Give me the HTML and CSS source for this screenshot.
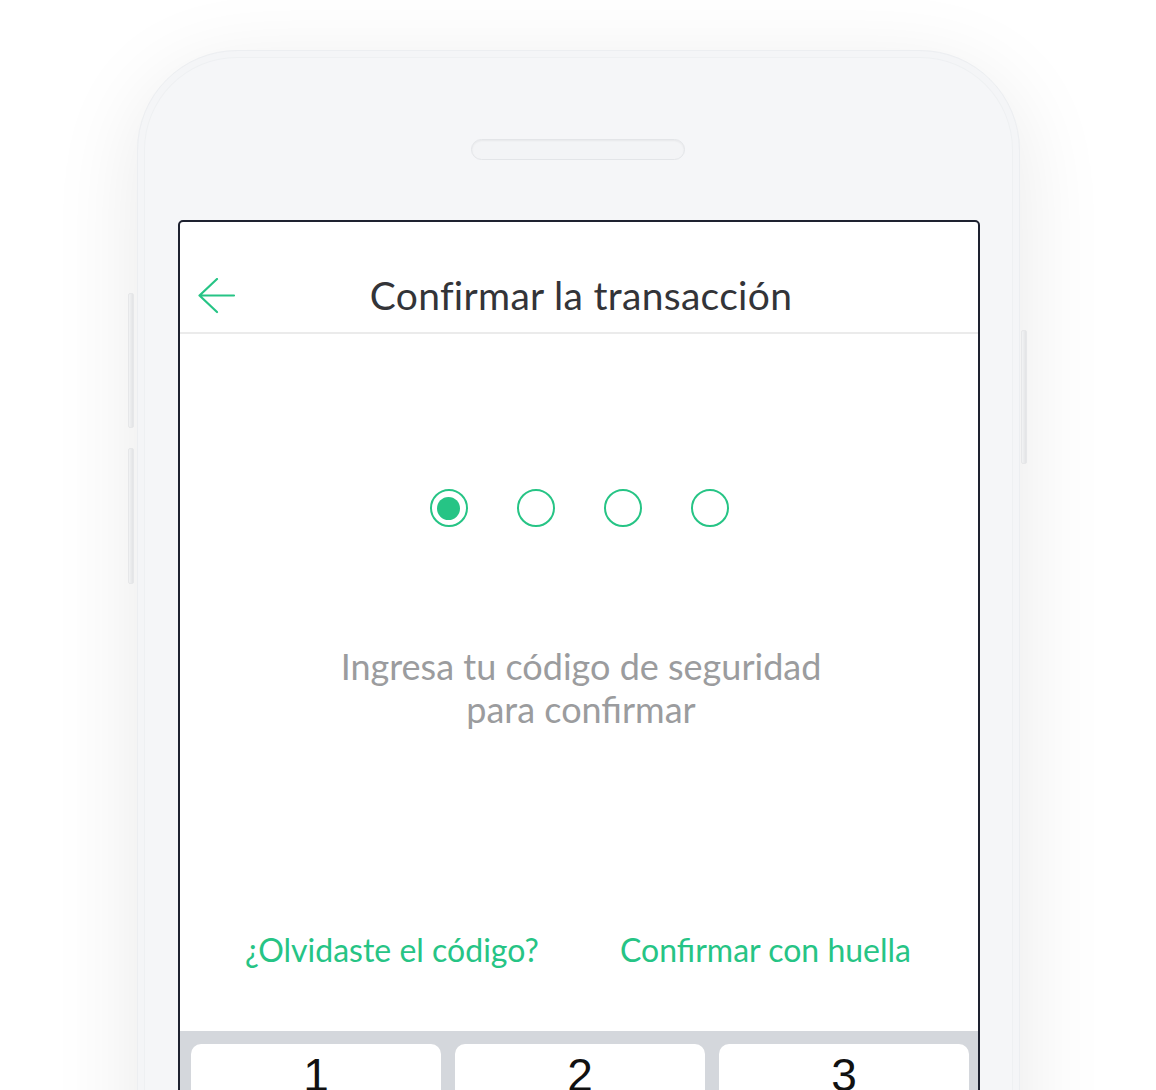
FILE: index.html
```html
<!DOCTYPE html>
<html lang="es">
<head>
<meta charset="utf-8">
<title>Confirmar la transacción</title>
<link rel="stylesheet" href="styles.css">
</head>
<body>
<div class="stage">
  <div class="phone">
    <span class="btn btn-l1"></span>
    <span class="btn btn-l2"></span>
    <span class="btn btn-r"></span>
    <div class="speaker"></div>
    <div class="screen">
      <header class="topbar">
        <div class="back">
          <svg width="38" height="36" viewBox="0 0 38 36" fill="none" stroke="#26c485" stroke-width="2.2" stroke-linecap="round" stroke-linejoin="round">
            <path d="M36 17.5 H1.5 M19 1 L1.5 17.5 L19 34"/>
          </svg>
        </div>
        <h1 class="title">Confirmar la transacción</h1>
        <div></div>
      </header>
      <main class="content">
        <div class="dots">
          <span class="dot dot-on"></span>
          <span class="dot"></span>
          <span class="dot"></span>
          <span class="dot"></span>
        </div>
        <p class="hint">Ingresa tu código de seguridad<br>para confirmar</p>
        <div class="links">
          <a class="link">¿Olvidaste el código?</a>
          <a class="link">Confirmar con huella</a>
        </div>
      </main>
      <div class="keypad">
        <div class="key">1</div>
        <div class="key">2</div>
        <div class="key">3</div>
      </div>
    </div>
  </div>
</div>
</body>
</html>
```

FILE: styles.css
```css
html, body {
  margin: 0;
  padding: 0;
  background: #ffffff;
}
body {
  width: 1156px;
  height: 1090px;
  overflow: hidden;
}
.stage {
  padding: 50px 0 0 137px;
}
.phone {
  position: relative;
  width: 883px;
  height: 1300px;
  box-sizing: border-box;
  padding: 88px 0 0 40px;
  background: #f5f6f8;
  border: 1px solid #eceef1;
  border-radius: 100px;
  box-shadow: inset 0 0 0 6px #f4f5f7, inset 0 0 0 7px #eef0f2, 0 20px 90px rgba(0,0,0,0.09);
}
.btn {
  position: absolute;
  width: 6px;
  background: linear-gradient(90deg, #f2f3f4, #e2e3e5);
  border: 1px solid #e6e7e9;
  border-radius: 2px;
  box-sizing: border-box;
}
.btn-l1 { left: -10px; top: 242px; height: 135px; }
.btn-l2 { left: -10px; top: 397px; height: 136px; }
.btn-r { right: -8px; top: 279px; height: 134px; }
.speaker {
  width: 214px;
  height: 21px;
  box-sizing: border-box;
  margin-left: 293px;
  background: #f3f4f6;
  border: 1px solid #e3e5e8;
  border-radius: 11px;
  box-shadow: inset 0 1px 2px rgba(0,0,0,0.05);
}
.screen {
  margin-top: 60px;
  width: 802px;
  height: 1100px;
  box-sizing: border-box;
  border: 2px solid #1e2230;
  border-radius: 5px;
  background: #ffffff;
  overflow: hidden;
  display: flex;
  flex-direction: column;
}
.topbar {
  height: 112px;
  box-sizing: border-box;
  padding-top: 35px;
  border-bottom: 2px solid #ebebeb;
  display: grid;
  grid-template-columns: 1fr auto 1fr;
  align-items: center;
}
.back {
  padding-left: 18px;
  display: flex;
  align-items: center;
  padding-top: 2px;
}
.title {
  margin: 0;
  font-family: "Lato", "Open Sans", sans-serif;
  font-weight: 400;
  font-size: 39px;
  line-height: 44px;
  letter-spacing: 0.3px;
  color: #333438;
  padding-left: 4px;
}
.content {
  display: flex;
  flex-direction: column;
  align-items: center;
}
.dots {
  margin-top: 155px;
  display: flex;
  gap: 49px;
}
.dot {
  width: 38px;
  height: 38px;
  box-sizing: border-box;
  border: 2.5px solid #26c485;
  border-radius: 50%;
  display: flex;
  align-items: center;
  justify-content: center;
}
.dot-on::after {
  content: "";
  width: 23px;
  height: 23px;
  border-radius: 50%;
  background: #26c485;
}
.hint {
  margin: 118px 0 0;
  text-align: center;
  font-family: "Lato", "Open Sans", sans-serif;
  font-size: 36px;
  line-height: 43px;
  color: #9b9c9e;
  padding-left: 4px;
}
.links {
  margin-top: 199px;
  align-self: stretch;
  display: flex;
  justify-content: space-between;
  padding: 0 67px 0 65px;
}
.link {
  font-family: "Lato", "Open Sans", sans-serif;
  font-size: 32px;
  line-height: 40px;
  color: #26c485;
}
.keypad {
  margin-top: 61px;
  flex: 1;
  background: #d4d7dc;
  display: grid;
  grid-template-columns: repeat(3, 250px);
  column-gap: 14px;
  padding: 13px 9px 0 11px;
  align-content: start;
}
.key {
  height: 90px;
  background: #ffffff;
  border-radius: 10px;
  box-sizing: border-box;
  padding-top: 8px;
  text-align: center;
  font-family: "Liberation Sans", Arial, sans-serif;
  font-size: 46px;
  line-height: 1;
  color: #111111;
}
```
